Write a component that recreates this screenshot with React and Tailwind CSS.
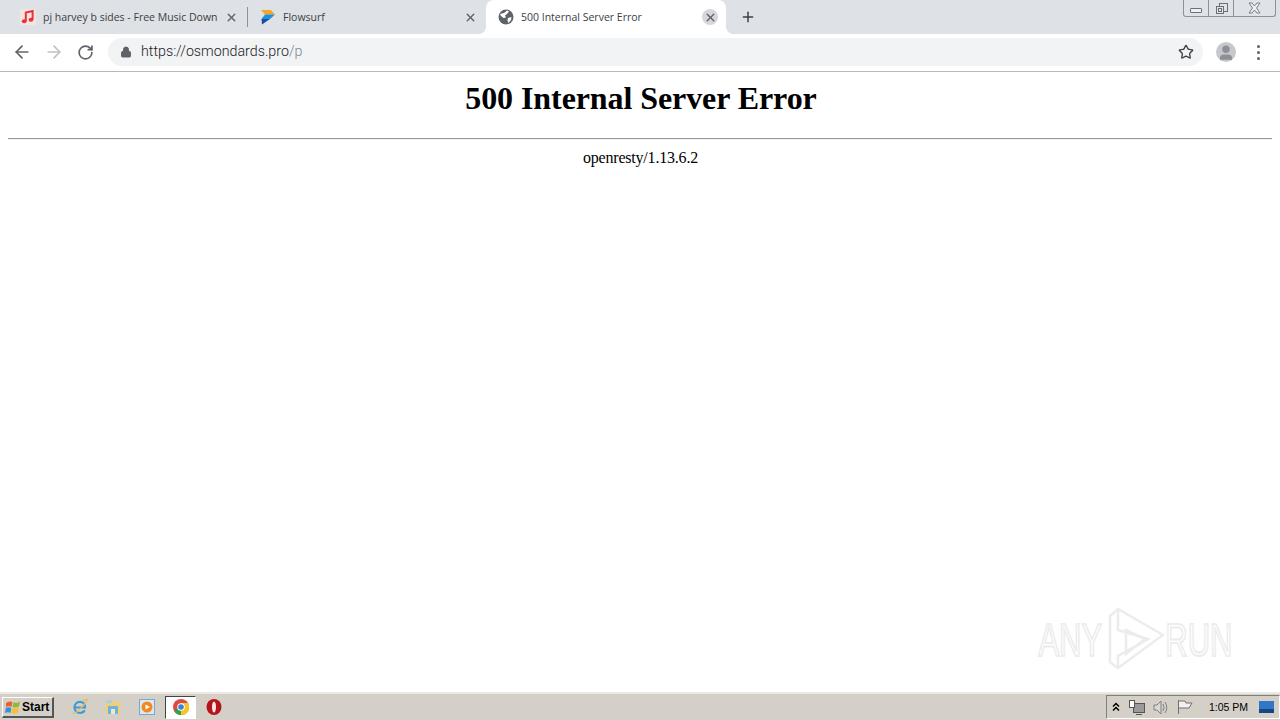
import React from 'react';
import { ArrowLeft, ArrowRight, RotateCw, Lock, Star, X, Plus, User } from 'lucide-react';

const uiFont = "font-['Open_Sans',sans-serif]";

const MusicIcon = () => (
  <svg width="16" height="16" viewBox="0 0 16 16">
    <rect width="16" height="16" rx="2" fill="#f6e4e0" />
    <path d="M5.8 12 V3.6 L12.6 2 V10.5" fill="none" stroke="#e8323c" strokeWidth="2" />
    <ellipse cx="4.2" cy="12.2" rx="2.4" ry="2" fill="#e8323c" />
    <ellipse cx="11" cy="10.8" rx="2.4" ry="2" fill="#e8323c" />
  </svg>
);

const FlowsurfIcon = () => (
  <svg width="16" height="16" viewBox="0 0 16 16">
    <path d="M1 1 H11 L15 5.5 H5 Z" fill="#f5a623" />
    <path d="M5 5.5 H15 L10 10 H1.5 Z" fill="#1f8fe0" />
    <path d="M1.5 10 H10 L2 15.5 Z" fill="#1450a8" />
  </svg>
);

const GlobeIcon = () => (
  <svg width="16" height="16" viewBox="0 0 16 16">
    <circle cx="8" cy="8" r="7.5" fill="#5f6368" />
    <path d="M2 5 L6 4 L9 1.5 L11 2.5 L9 5 L7 6.5 L8 8.5 L5.5 9 L3 7 Z" fill="#fff" />
    <path d="M10 9 L13.5 8 L13 11 L10.5 14 L9.5 11.5 Z" fill="#fff" />
  </svg>
);

const Tab = ({ icon, title, active }) => (
  <div
    className={`relative flex h-[34px] w-full items-center pl-3 pr-2 ${
      active ? 'rounded-t-lg bg-white' : ''
    }`}
  >
    {active && (
      <>
        <span className="absolute -left-2 bottom-0 h-2 w-2 bg-[radial-gradient(circle_at_0_0,transparent_8px,white_8px)]" />
        <span className="absolute -right-2 bottom-0 h-2 w-2 bg-[radial-gradient(circle_at_100%_0,transparent_8px,white_8px)]" />
      </>
    )}
    <span className="flex h-4 w-4 shrink-0">{icon}</span>
    <span className={`ml-[7px] flex-1 whitespace-nowrap pt-px text-[10.5px] text-[#3c4043] ${uiFont}`}>
      {title}
    </span>
    <span
      className={`flex h-4 w-4 shrink-0 items-center justify-center rounded-full ${active ? 'bg-[#d5d7db]' : ''}`}
    >
      <X size={13} strokeWidth={2.6} color="#5f6368" />
    </span>
  </div>
);

const WindowControls = () => (
  <div className="absolute right-[4px] top-0 flex h-[17px] w-[93px] rounded-b-[3px] border border-t-0 border-[#8b929b] bg-[#dfe2e7]">
    <div className="flex w-[25px] items-end justify-center border-r border-[#8b929b] pb-[3px]">
      <span className="h-[5px] w-[12px] rounded-[1px] border border-[#6b7078] bg-[#eef0f3]" />
    </div>
    <div className="flex w-[25px] items-center justify-center border-r border-[#8b929b]">
      <svg width="13" height="13" viewBox="0 0 13 13" fill="none" stroke="#6b7078">
        <rect x="4.5" y="1.5" width="8" height="8" />
        <rect x="1.5" y="4.5" width="7" height="7" fill="#dfe2e7" />
        <rect x="3.5" y="6.5" width="3" height="3" />
      </svg>
    </div>
    <div className="flex flex-1 items-center justify-center">
      <svg width="13" height="12" viewBox="0 0 13 12" fill="none" stroke="#7b8088">
        <path d="M1 1 H4 L6.5 4 L9 1 H12 L8.5 6 L12 11 H9 L6.5 8 L4 11 H1 L4.5 6 Z" fill="#eef0f3" />
      </svg>
    </div>
  </div>
);

const TabStrip = () => (
  <div className="relative flex h-[34px] items-center bg-[#dee1e6] pl-[8px]">
    <div className="w-[239px] shrink-0">
      <Tab icon={<MusicIcon />} title="pj harvey b sides - Free Music Down" />
    </div>
    <span className="h-[20px] w-px shrink-0 bg-[#8f9296]" />
    <div className="w-[238px] shrink-0">
      <Tab icon={<FlowsurfIcon />} title="Flowsurf" />
    </div>
    <div className="w-[240px] shrink-0">
      <Tab icon={<GlobeIcon />} title="500 Internal Server Error" active />
    </div>
    <Plus size={16} strokeWidth={2.2} color="#3c4043" className="ml-[14px]" />
    <WindowControls />
  </div>
);

const Toolbar = () => (
  <div className="flex h-[38px] items-center border-b border-[#b8b8b8] bg-white pb-px">
    <div className="flex items-center gap-[12px] pl-[12px]">
      <ArrowLeft size={20} strokeWidth={2} color="#5f6368" />
      <ArrowRight size={20} strokeWidth={2} color="#bdc1c6" />
      <RotateCw size={17} strokeWidth={2.4} color="#5f6368" className="ml-[1px]" />
    </div>
    <div className="ml-[14px] flex h-[28px] w-[1095px] items-center rounded-full bg-[#f1f3f4] pl-[12px] pr-[9px]">
      <Lock size={12} fill="#5f6368" color="#5f6368" />
      <span className="ml-[9px] flex-1 font-['Roboto',sans-serif] text-[14.25px] font-light text-[#202124]">
        https://osmondards.pro<span className="text-[#80868b]">/p</span>
      </span>
      <Star size={16} strokeWidth={2} color="#3c4043" />
    </div>
    <div className="ml-[13px] flex h-[20px] w-[20px] items-end justify-center overflow-hidden rounded-full bg-[#c6c8cb]">
      <User size={18} fill="#8d9094" color="#8d9094" />
    </div>
    <div className="ml-[21px] flex flex-col gap-[3px]">
      <span className="h-[3px] w-[3px] rounded-full bg-[#5f6368]" />
      <span className="h-[3px] w-[3px] rounded-full bg-[#5f6368]" />
      <span className="h-[3px] w-[3px] rounded-full bg-[#5f6368]" />
    </div>
  </div>
);

const watermarkText =
  "font-['Liberation_Sans',sans-serif] text-[47px] font-normal leading-none text-white [-webkit-text-stroke:2px_#ececec] [transform:scaleX(0.66)]";

const Watermark = () => (
  <div className="absolute bottom-[22px] right-[48px] flex items-center">
    <div className="flex w-[64px] justify-center">
      <span className={watermarkText}>ANY</span>
    </div>
    <svg width="63" height="62" viewBox="0 0 63 62" fill="none" stroke="#ececec" strokeWidth="2.5">
      <path d="M8 8 L16 1 L61 27 L16 60 L8 54 Z" />
      <path d="M16 1 V22 L46 31 L16 48 V60" />
      <path d="M24 22 L43 31 L24 46 Z" />
    </svg>
    <div className="flex w-[67px] justify-center">
      <span className={watermarkText}>RUN</span>
    </div>
  </div>
);

const Page = () => (
  <main className="relative flex-1 overflow-hidden bg-white px-2 font-['Liberation_Serif',serif] text-black">
    <h1 className="mt-[8px] pl-[2px] text-center text-[32px] font-bold leading-[37px] tracking-[-0.08px]">500 Internal Server Error</h1>
    <hr className="mt-[21px] border-t border-b border-t-[#9a9a9a] border-b-[#f0f0f0]" />
    <p className="mt-[9px] pl-px text-center text-[16px] leading-[18px] tracking-[-0.2px]">openresty/1.13.6.2</p>
    <Watermark />
  </main>
);

const Taskbar = () => (
  <div className="flex h-[28px] items-center border-t-2 border-[#ece9e1] bg-[#d4d0c8]">
    <button className="ml-[2px] flex h-[21px] w-[52px] items-center gap-[1px] border border-b-2 border-r-2 border-t-white border-l-white border-r-[#555555] border-b-[#555555] pl-[2px] font-['Liberation_Sans',sans-serif] text-[12px] font-bold">
      <svg width="16" height="16" viewBox="0 0 16 16">
        <path d="M1 4 Q4 1.5 7.5 3 L6.5 8 Q3.5 6.5 1 8 Z" fill="#e8622c" />
        <path d="M8.5 3.2 Q12 4.5 15 2.5 L14 7.5 Q11 9 7.5 8 Z" fill="#8fb83e" />
        <path d="M0.8 9 Q3.5 7.5 6.3 9 L5.5 14 Q3 12.5 0 14 Z" fill="#3a8ed8" />
        <path d="M7.3 9 Q11 10 13.8 8.5 L13 13.5 Q10 15 6.5 14 Z" fill="#f5c02c" />
      </svg>
      Start
    </button>
    <div className="ml-[17px] flex items-center">
      <svg width="18" height="18" viewBox="0 0 18 18" fill="none">
        <path d="M4 9.5 H14 C14 6 12 3.8 9 3.8 C5.8 3.8 3.5 6.3 3.5 9.5 C3.5 12.8 5.8 15 9 15 C11 15 12.8 14 13.7 12.3" stroke="#3f9bd8" strokeWidth="2.2" />
        <path d="M1.5 15.5 C5 16 13 8 16.5 1.5 C14.5 1 13 1.5 11 3" stroke="#e6c050" strokeWidth="1.3" />
      </svg>
      <svg width="16" height="16" viewBox="0 0 16 16" className="ml-[16px]">
        <rect x="1" y="3" width="14" height="12" fill="#f0d070" />
        <rect x="1" y="1" width="6" height="3" fill="#a8d0e8" />
        <rect x="3" y="7" width="10" height="8" fill="#6fb4de" />
        <rect x="6" y="10" width="4" height="5" fill="#f0e8c8" />
      </svg>
      <svg width="16" height="16" viewBox="0 0 16 16" className="ml-[18px]">
        <rect x="0.5" y="0.5" width="15" height="15" fill="#dce9f5" stroke="#7da7cf" />
        <circle cx="8" cy="8" r="5.5" fill="#ef8a1f" />
        <path d="M6.5 5.5 L11 8 L6.5 10.5 Z" fill="#fff" />
      </svg>
      <div className="ml-[10px] flex h-[23px] w-[31px] items-center justify-center border border-t-[#444444] border-l-[#444444] border-r-white border-b-white bg-white">
        <svg width="16" height="16" viewBox="0 0 16 16">
          <circle cx="8" cy="8" r="8" fill="#dd4b3e" />
          <path d="M8 8 L1.1 12 A8 8 0 0 0 11 15.4 Z" fill="#2da44e" />
          <path d="M8 4 H15.5 A8 8 0 0 1 8 16 Z" fill="#f7c52b" />
          <circle cx="8" cy="8" r="3.8" fill="#fff" />
          <circle cx="8" cy="8" r="2.8" fill="#3b82d6" />
        </svg>
      </div>
      <svg width="16" height="18" viewBox="0 0 16 18" className="ml-[10px]">
        <ellipse cx="8" cy="9" rx="7.5" ry="8" fill="#b5141a" />
        <ellipse cx="8" cy="9" rx="2" ry="5.5" fill="#f6e6e6" />
      </svg>
    </div>
    <div className="ml-auto flex h-[24px] w-[174px] items-center border border-t-[#808080] border-l-[#808080] border-r-white border-b-white pl-[3px]">
      <svg width="10" height="10" viewBox="0 0 10 10" fill="none" stroke="#000000" strokeWidth="1.5" className="ml-[1px]">
        <path d="M2 4.5 L5 1.5 L8 4.5 M2 8.5 L5 5.5 L8 8.5" />
      </svg>
      <svg width="17" height="17" viewBox="0 0 17 17" className="ml-[7px]" fill="none" stroke="#555555">
        <rect x="5.5" y="4.5" width="11" height="9" fill="#9a9a9a" />
        <rect x="1.5" y="1.5" width="5" height="7" fill="#fff" />
        <path d="M8 15.5 H14" />
      </svg>
      <svg width="17" height="17" viewBox="0 0 17 17" className="ml-[7px]" fill="none" stroke="#808080">
        <path d="M2 6 H5 L9 2 V15 L5 11 H2 Z" fill="#d8d8d8" />
        <path d="M11 5 Q13 8.5 11 12 M13 3 Q16.5 8.5 13 14" />
      </svg>
      <svg width="17" height="16" viewBox="0 0 17 16" className="ml-[7px]" fill="none" stroke="#707070">
        <path d="M2.5 1 V15" />
        <path d="M3 2 H9 L10 4 H16 L13 9 H3" fill="#f0f0f0" />
      </svg>
      <span className="ml-[16px] pt-px font-['Liberation_Sans',sans-serif] text-[10.5px] text-black">1:05 PM</span>
      <svg width="15" height="12" viewBox="0 0 15 12" className="ml-[11px]">
        <rect width="15" height="12" fill="#2f78c8" />
        <rect y="8" width="15" height="4" fill="#16487f" />
      </svg>
    </div>
  </div>
);

export default function App() {
  return (
    <div className="flex h-screen w-full flex-col overflow-hidden">
      <TabStrip />
      <Toolbar />
      <Page />
      <Taskbar />
    </div>
  );
}
